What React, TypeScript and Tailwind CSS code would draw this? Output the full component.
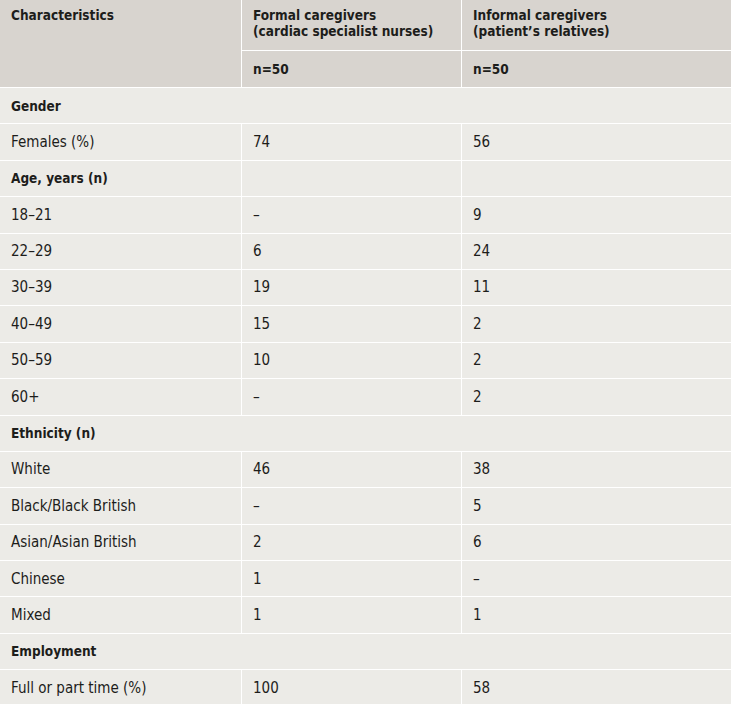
import React from "react"

type Row = { label: string; a?: string; b?: string; section?: boolean; split?: boolean }

const rows: Row[] = [
  { label: "Gender", section: true },
  { label: "Females (%)", a: "74", b: "56" },
  { label: "Age, years (n)", section: true, split: true },
  { label: "18–21", a: "–", b: "9" },
  { label: "22–29", a: "6", b: "24" },
  { label: "30–39", a: "19", b: "11" },
  { label: "40–49", a: "15", b: "2" },
  { label: "50–59", a: "10", b: "2" },
  { label: "60+", a: "–", b: "2" },
  { label: "Ethnicity (n)", section: true },
  { label: "White", a: "46", b: "38" },
  { label: "Black/Black British", a: "–", b: "5" },
  { label: "Asian/Asian British", a: "2", b: "6" },
  { label: "Chinese", a: "1", b: "–" },
  { label: "Mixed", a: "1", b: "1" },
  { label: "Employment", section: true },
  { label: "Full or part time (%)", a: "100", b: "58" },
]

const font = { fontFamily: '"DejaVu Sans Condensed", "DejaVu Sans", sans-serif' }

export default function App() {
  return (
    <div className="w-[731px] h-[704px] overflow-hidden bg-white text-[#1d1d1b]" style={font}>
      <div className="grid grid-cols-[241px_219px_1fr] gap-px bg-white">
        {/* Header */}
        <div className="row-span-2 bg-[#d8d4cf] px-[11px] pt-[7px] text-[13.5px] font-bold leading-[16px]">
          Characteristics
        </div>
        <div className="h-[50px] bg-[#d8d4cf] px-[11px] pt-[7px] text-[13.5px] font-bold leading-[16px]">
          Formal caregivers
          <br />
          (cardiac specialist nurses)
        </div>
        <div className="h-[50px] bg-[#d8d4cf] px-[11px] pt-[7px] text-[13.5px] font-bold leading-[16px]">
          Informal caregivers
          <br />
          (patient’s relatives)
        </div>
        <div className="h-[36px] flex items-center bg-[#d8d4cf] px-[11px] text-[13.5px] font-bold">n=50</div>
        <div className="h-[36px] flex items-center bg-[#d8d4cf] px-[11px] text-[13.5px] font-bold">n=50</div>

        {/* Body */}
        {rows.map((r) =>
          r.section && !r.split ? (
            <div
              key={r.label}
              className="col-span-3 h-[35.4px] flex items-center bg-[#ecebe7] px-[11px] text-[13.5px] font-bold"
            >
              {r.label}
            </div>
          ) : (
            <React.Fragment key={r.label}>
              <div
                className={`h-[35.4px] flex items-center bg-[#ecebe7] px-[11px] ${
                  r.section ? "text-[13.5px] font-bold" : "text-[15px]"
                }`}
              >
                {r.label}
              </div>
              <div className="h-[35.4px] flex items-center bg-[#ecebe7] px-[11px] text-[15px]">{r.a}</div>
              <div className="h-[35.4px] flex items-center bg-[#ecebe7] px-[11px] text-[15px]">{r.b}</div>
            </React.Fragment>
          )
        )}
      </div>
    </div>
  )
}
